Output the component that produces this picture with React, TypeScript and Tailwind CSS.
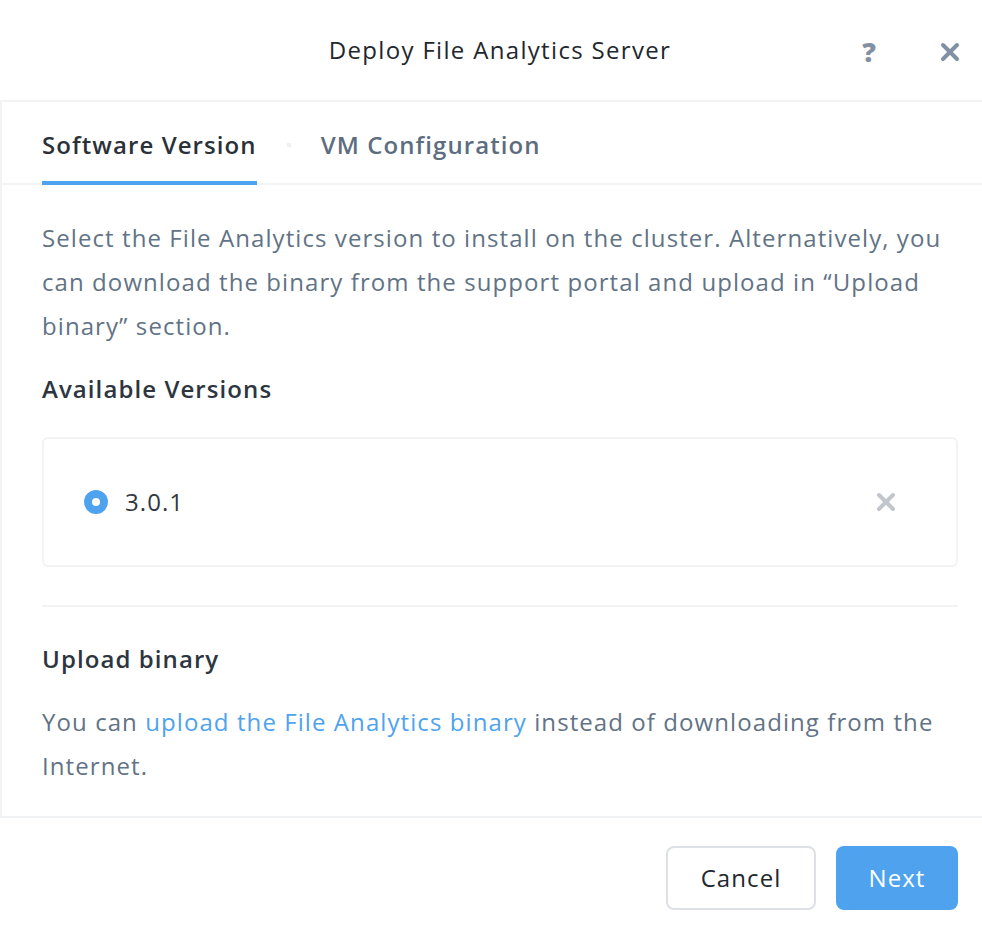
import React from 'react';

const font = { fontFamily: '"Open Sans", Lato, sans-serif' };

export default function App() {
  return (
    <div className="w-[982px] h-[928px] bg-white flex flex-col text-[24px] tracking-[0.045em]" style={font}>
      {/* Header */}
      <div className="h-[102px] shrink-0 flex items-center relative border-b-2 border-[#f2f3f4]">
        <div className="flex-1 text-center text-[#22272e] pl-[18px] tracking-[0.055em]">Deploy File Analytics Server</div>
        <div className="absolute right-[22px] top-[38px] flex items-center gap-[63px]">
          <span className="text-[#8190a3] font-extrabold text-[27px] leading-none">?</span>
          <svg width="20" height="20" viewBox="0 0 20 20">
            <path d="M3 3 L17 17 M17 3 L3 17" stroke="#8190a3" strokeWidth="4" strokeLinecap="round" />
          </svg>
        </div>
      </div>

      {/* Body */}
      <div className="flex-1 flex flex-col border-l-2 border-[#f2f3f4]">
        {/* Tabs */}
        <div className="h-[83px] shrink-0 flex items-end border-b-2 border-[#f2f3f4] pl-[40px] -mb-[2px]">
          <div className="flex items-end">
            <div className="pb-[18px] border-b-4 border-[#4fa3ee] font-semibold text-[#2b3138] -mb-[2px]">Software Version</div>
            <div className="w-[4px] h-[4px] bg-[#eef0f2] mx-[30px] mb-[36px]" />
            <div className="pb-[20px] font-semibold text-[#5d6d80]">VM Configuration</div>
          </div>
        </div>

        <div className="pl-[40px] pr-[24px] pt-[33px] flex flex-col">
          <p className="text-[#627386] leading-[44px]">
            Select the File Analytics version to install on the cluster. Alternatively, you can download the binary from the support portal and upload in “Upload binary” section.
          </p>
          <div className="mt-[23px] font-semibold text-[#2d3640]">Available Versions</div>

          <div className="mt-[30px] h-[130px] border-2 border-[#f2f3f4] rounded-[6px] flex items-center pl-[40px] pr-[60px]">
            <div className="w-[24px] h-[24px] rounded-full bg-[#4fa3ee] flex items-center justify-center">
              <div className="w-[8px] h-[8px] rounded-full bg-white" />
            </div>
            <span className="ml-[17px] text-[#2f3842] flex-1">3.0.1</span>
            <svg width="20" height="20" viewBox="0 0 20 20">
              <path d="M3 3 L17 17 M17 3 L3 17" stroke="#c2c6cd" strokeWidth="4" strokeLinecap="round" />
            </svg>
          </div>

          <div className="mt-[38px] border-t-2 border-[#f2f3f4]" />

          <div className="mt-[34px] font-semibold text-[#2d3640]">Upload binary</div>
          <p className="mt-[23px] text-[#627386] leading-[44px]">
            You can <span className="text-[#4fa3ee]">upload the File Analytics binary</span> instead of downloading from the Internet.
          </p>
        </div>
      </div>

      {/* Footer */}
      <div className="h-[112px] shrink-0 border-t-2 border-[#f2f3f4] flex items-start justify-end gap-[20px] pr-[24px] pt-[28px]">
        <button className="w-[150px] h-[64px] border-2 border-[#dde0e4] rounded-[8px] text-[#22272e] bg-white">Cancel</button>
        <button className="w-[122px] h-[64px] rounded-[8px] bg-[#4fa3ee] text-white">Next</button>
      </div>
    </div>
  );
}
